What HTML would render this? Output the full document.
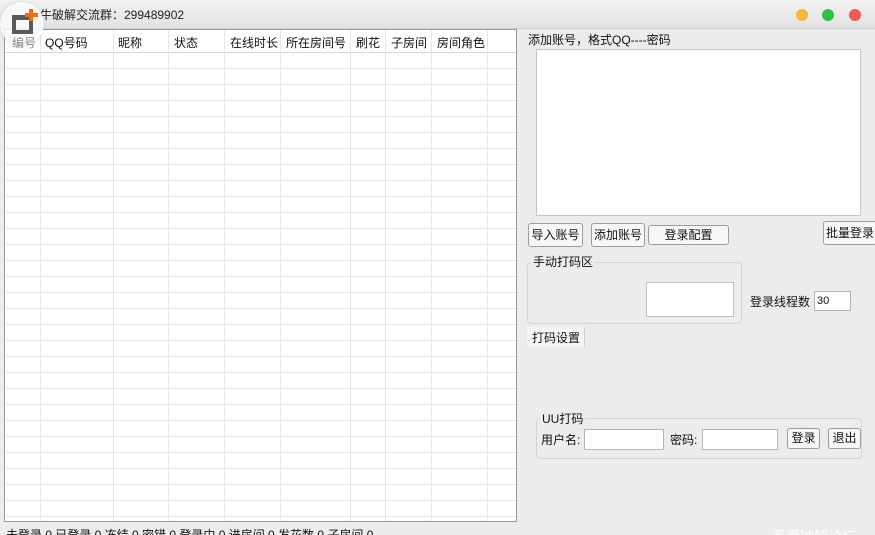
<!DOCTYPE html>
<html style="width:875px;height:535px;overflow:hidden"><head><meta charset="utf-8"><style>
*{margin:0;padding:0;box-sizing:border-box}
body{width:875px;height:535px;overflow:hidden;background:#ececec;font-family:"Liberation Sans","Noto Sans CJK SC",sans-serif;font-size:12px;color:#111;position:relative;white-space:nowrap}
.abs{position:absolute}
.title{left:0;top:0;width:875px;height:29px;background:linear-gradient(#f2f2f2,#e2e2e2);border-bottom:1px solid #cfcfcf}
.btn{position:absolute;background:#f7f7f7;border:1px solid #9c9c9c;border-radius:3px;text-align:center;line-height:20px;font-size:12px}
.inp{position:absolute;background:#fff;border:1px solid #b5b5b5}
.grp{position:absolute;border:1px solid #d4d4d4;border-radius:4px}
.lbl{position:absolute;background:#ececec;padding:0 2px;white-space:nowrap}
.ic{z-index:5}
</style></head><body>
<div class="abs title"></div>
<div class="abs" style="left:40px;top:6px;font-size:12px;color:#222">牛破解交流群：299489902</div>
<div class="abs" style="left:796px;top:9px;width:12px;height:12px;border-radius:50%;background:#f5b73b"></div>
<div class="abs" style="left:822px;top:9px;width:12px;height:12px;border-radius:50%;background:#2fc146"></div>
<div class="abs" style="left:849px;top:9px;width:12px;height:12px;border-radius:50%;background:#f25a55"></div>

<svg class="abs" style="left:4px;top:29px" width="514" height="494">
<rect x="0.5" y="0.5" width="512" height="492" fill="#fff" stroke="#9a9a9a"/>
<line x1="1" y1="23.5" x2="512" y2="23.5" stroke="#d8d8d8"/>
<g stroke="#e6e6e6">
<line x1="1" y1="39.5" x2="512" y2="39.5"/><line x1="1" y1="55.5" x2="512" y2="55.5"/><line x1="1" y1="71.5" x2="512" y2="71.5"/><line x1="1" y1="87.5" x2="512" y2="87.5"/><line x1="1" y1="103.5" x2="512" y2="103.5"/><line x1="1" y1="119.5" x2="512" y2="119.5"/><line x1="1" y1="135.5" x2="512" y2="135.5"/><line x1="1" y1="151.5" x2="512" y2="151.5"/><line x1="1" y1="167.5" x2="512" y2="167.5"/><line x1="1" y1="183.5" x2="512" y2="183.5"/><line x1="1" y1="199.5" x2="512" y2="199.5"/><line x1="1" y1="215.5" x2="512" y2="215.5"/><line x1="1" y1="231.5" x2="512" y2="231.5"/><line x1="1" y1="247.5" x2="512" y2="247.5"/><line x1="1" y1="263.5" x2="512" y2="263.5"/><line x1="1" y1="279.5" x2="512" y2="279.5"/><line x1="1" y1="295.5" x2="512" y2="295.5"/><line x1="1" y1="311.5" x2="512" y2="311.5"/><line x1="1" y1="327.5" x2="512" y2="327.5"/><line x1="1" y1="343.5" x2="512" y2="343.5"/><line x1="1" y1="359.5" x2="512" y2="359.5"/><line x1="1" y1="375.5" x2="512" y2="375.5"/><line x1="1" y1="391.5" x2="512" y2="391.5"/><line x1="1" y1="407.5" x2="512" y2="407.5"/><line x1="1" y1="423.5" x2="512" y2="423.5"/><line x1="1" y1="439.5" x2="512" y2="439.5"/><line x1="1" y1="455.5" x2="512" y2="455.5"/><line x1="1" y1="471.5" x2="512" y2="471.5"/><line x1="1" y1="487.5" x2="512" y2="487.5"/>
<line x1="36.5" y1="1" x2="36.5" y2="492"/><line x1="109.5" y1="1" x2="109.5" y2="492"/><line x1="164.5" y1="1" x2="164.5" y2="492"/><line x1="220.5" y1="1" x2="220.5" y2="492"/><line x1="276.5" y1="1" x2="276.5" y2="492"/><line x1="346.5" y1="1" x2="346.5" y2="492"/><line x1="381.5" y1="1" x2="381.5" y2="492"/><line x1="427.5" y1="1" x2="427.5" y2="492"/><line x1="483.5" y1="1" x2="483.5" y2="492"/>
</g></svg>
<div class="abs" style="top:34px;left:45px">QQ号码</div>
<div class="abs" style="top:34px;left:118px">昵称</div>
<div class="abs" style="top:34px;left:174px">状态</div>
<div class="abs" style="top:34px;left:230px">在线时长</div>
<div class="abs" style="top:34px;left:286px">所在房间号</div>
<div class="abs" style="top:34px;left:356px">刷花</div>
<div class="abs" style="top:34px;left:391px">子房间</div>
<div class="abs" style="top:34px;left:437px">房间角色</div>

<div class="abs ic" style="left:0px;top:2px;width:44px;height:44px;border-radius:50%;background:rgba(250,250,250,.85);box-shadow:0 0 3px rgba(0,0,0,.15)"></div>
<div class="abs ic" style="top:34px;left:12px;color:#888">编号</div>
<div class="abs ic" style="left:12px;top:15px;width:21px;height:19px;border:4px solid #5a5a5a;border-top-width:5px"></div>
<div class="abs ic" style="left:25px;top:13px;width:13px;height:4px;background:#f06a1c"></div>
<div class="abs ic" style="left:29px;top:9px;width:4px;height:12px;background:#f06a1c"></div>

<div class="abs" style="top:526px;left:6px">未登录 0 已登录 0 冻结 0 密错 0 登录中 0 进房间 0 发花数 0 子房间 0</div>
<div class="abs" style="top:527px;left:772px;color:#fff;font-size:14px">吾爱破解论坛</div>

<div class="abs" style="left:528px;top:31px">添加账号，格式QQ----密码</div>
<div class="inp" style="left:536px;top:49px;width:325px;height:167px;border-color:#c6c6c6"></div>
<div class="btn" style="left:528px;top:223px;width:55px;height:24px;line-height:22px">导入账号</div>
<div class="btn" style="left:591px;top:223px;width:54px;height:24px;line-height:22px">添加账号</div>
<div class="btn" style="left:648px;top:225px;width:81px;height:20px;line-height:18px">登录配置</div>
<div class="btn" style="left:823px;top:221px;width:54px;height:24px;line-height:22px">批量登录</div>
<div class="grp" style="left:527px;top:262px;width:215px;height:62px"></div>
<div class="lbl" style="left:531px;top:253px">手动打码区</div>
<div class="inp" style="left:646px;top:282px;width:88px;height:35px;border-color:#c0c0c0"></div>
<div class="abs" style="left:750px;top:293px">登录线程数</div>
<div class="inp" style="left:814px;top:291px;width:37px;height:20px;font-size:11px;padding:3px 2px">30</div>
<div class="abs" style="left:527px;top:327px;width:58px;height:20px;background:#f4f4f4;border-right:1px solid #cfcfcf;padding:2px 5px">打码设置</div>
<div class="grp" style="left:536px;top:418px;width:326px;height:41px"></div>
<div class="lbl" style="left:540px;top:410px">UU打码</div>
<div class="abs" style="left:541px;top:431px">用户名:</div>
<div class="inp" style="left:584px;top:429px;width:80px;height:21px"></div>
<div class="abs" style="left:670px;top:431px">密码:</div>
<div class="inp" style="left:702px;top:429px;width:76px;height:21px"></div>
<div class="btn" style="left:787px;top:428px;width:33px;height:21px;line-height:19px">登录</div>
<div class="btn" style="left:828px;top:428px;width:33px;height:21px;line-height:19px">退出</div>
</body></html>
